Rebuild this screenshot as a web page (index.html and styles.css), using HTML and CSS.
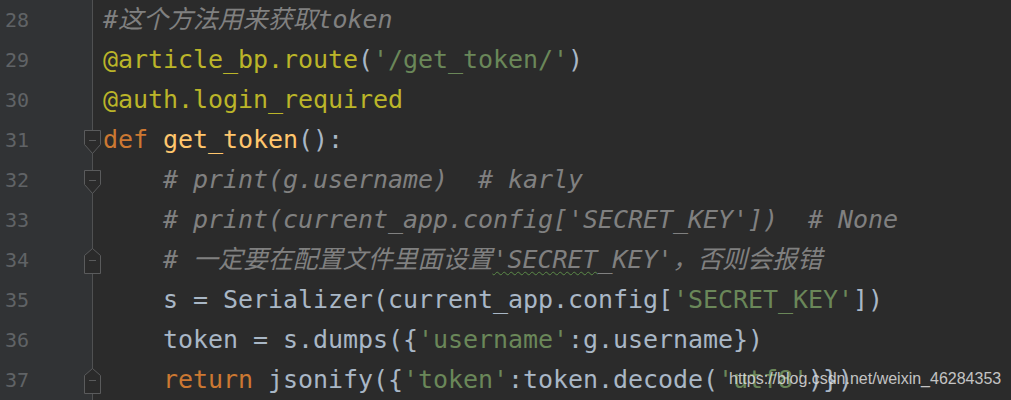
FILE: index.html
```html
<!DOCTYPE html>
<html>
<head>
<meta charset="utf-8">
<link rel="stylesheet" href="styles.css">
</head>
<body>
<div class="editor">
  <div class="line"><div class="gutter"><span class="ln">28</span></div><div class="code"><span class="c">#这个方法用来获取token</span></div></div>
  <div class="line"><div class="gutter"><span class="ln">29</span></div><div class="code"><span class="d">@article_bp.route</span>(<span class="s">'/get_token/'</span>)</div></div>
  <div class="line"><div class="gutter"><span class="ln">30</span></div><div class="code"><span class="d">@auth.login_required</span></div></div>
  <div class="line"><div class="gutter"><span class="ln">31</span><svg class="fold fold-down" width="19" height="26" viewBox="0 0 19 26"><path d="M1.5 0.5 H17.5 V14.5 L9.5 23.5 L1.5 14.5 Z"/><path d="M6 10.5 H13"/></svg></div><div class="code"><span class="k">def</span> <span class="f">get_token</span>():</div></div>
  <div class="line"><div class="gutter"><span class="ln">32</span><svg class="fold fold-down" width="19" height="26" viewBox="0 0 19 26"><path d="M1.5 0.5 H17.5 V14.5 L9.5 23.5 L1.5 14.5 Z"/><path d="M6 10.5 H13"/></svg></div><div class="code">    <span class="c"># print(g.username)  # karly</span></div></div>
  <div class="line"><div class="gutter"><span class="ln">33</span></div><div class="code">    <span class="c"># print(current_app.config['SECRET_KEY'])  # None</span></div></div>
  <div class="line"><div class="gutter"><span class="ln">34</span><svg class="fold fold-up" width="19" height="27" viewBox="0 0 19 27"><path d="M9.5 0.5 L17.5 7.5 V25.5 H1.5 V7.5 Z"/><path d="M6 12.5 H13"/></svg></div><div class="code">    <span class="c"># 一定要在配置文件里面设置<span class="typo">'SECRET</span>_KEY'，否则会报错</span></div></div>
  <div class="line"><div class="gutter"><span class="ln">35</span></div><div class="code">    s = Serializer(current_app.config[<span class="s">'SECRET_KEY'</span>])</div></div>
  <div class="line"><div class="gutter"><span class="ln">36</span></div><div class="code">    token = s.dumps({<span class="s">'username'</span>:g.username})</div></div>
  <div class="line"><div class="gutter"><span class="ln">37</span><svg class="fold fold-up" width="19" height="27" viewBox="0 0 19 27"><path d="M9.5 0.5 L17.5 7.5 V25.5 H1.5 V7.5 Z"/><path d="M6 12.5 H13"/></svg></div><div class="code">    <span class="k">return</span> jsonify({<span class="s">'token'</span>:token.decode(<span class="s">'utf8'</span>)})</div></div>
  <div class="watermark">https://blog.csdn.net/weixin_46284353</div>
</div>
</body>
</html>
```
FILE: styles.css
```css
html, body {
  margin: 0;
  padding: 0;
  background: #2b2b2b;
}
.editor {
  position: relative;
  width: 1011px;
  height: 400px;
  overflow: hidden;
  background: #2b2b2b;
}
.line {
  display: flex;
  height: 40px;
}
.gutter {
  position: relative;
  width: 92px;
  flex: none;
  background: #313335;
  border-right: 1px solid #505152;
  padding-left: 5px;
  box-sizing: content-box;
  width: 87px;
}
.ln {
  font-family: "DejaVu Sans Mono", monospace;
  font-size: 20px;
  line-height: 40px;
  color: #606366;
}
.code {
  padding-left: 10px;
  font-family: "DejaVu Sans Mono", "Noto Sans CJK SC", monospace;
  font-size: 25px;
  letter-spacing: -0.05px;
  line-height: 40px;
  color: #a9b7c6;
  white-space: pre;
}
.c { color: #808080; font-style: italic; }
.d { color: #bbb529; }
.s { color: #6a8759; }
.k { color: #cc7832; }
.f { color: #ffc66d; }
.typo {
  text-decoration-line: underline;
  text-decoration-style: wavy;
  text-decoration-color: #5b8a48;
  text-decoration-thickness: 1px;
  text-underline-offset: 3px;
}
.fold {
  position: absolute;
  left: 83px;
  fill: #2b2b2b;
  stroke: #5a5b5c;
  stroke-width: 1;
}
.fold-down { top: 10px; }
.fold-up { top: 8px; }
.watermark {
  position: absolute;
  left: 729px;
  top: 369px;
  font-family: "Liberation Sans", Arial, sans-serif;
  font-size: 16px;
  line-height: 20px;
  color: rgba(225, 225, 225, 0.85);
  white-space: nowrap;
}
```
